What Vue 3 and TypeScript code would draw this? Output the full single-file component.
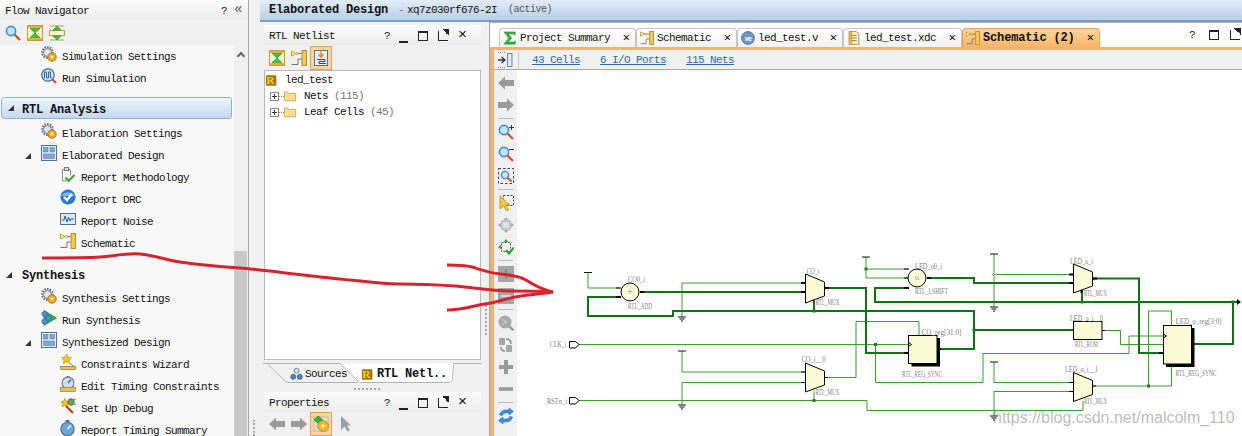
<template>
  <div class="screen">
    <svg class="sprite" aria-hidden="true">
      <symbol id="search" viewBox="0 0 16 16"><circle cx="6" cy="6" r="4.6" fill="#bfe3fa" stroke="#3f8fd0" stroke-width="1.6" /><path d="M9.6 9.6 15 15" stroke="#d0502c" stroke-width="2.2" /></symbol>
      <symbol id="collapse" viewBox="0 0 16 16"><rect x=".5" y=".5" width="15" height="15" fill="#fdf3cf" stroke="#c99a3a" /><path d="M1 2h14M1 14h14" stroke="#dcae4c" stroke-width="2" /><path d="M3 3.500h10L8 8zM3 12.500h10L8 8z" fill="#3fc23a" stroke="#2a8a28" stroke-width=".6" /></symbol>
      <symbol id="expand" viewBox="0 0 16 16"><rect x=".5" y="5.500" width="15" height="5" fill="#fdf3cf" stroke="#c99a3a" /><path d="M1 1h14M1 15h14" stroke="#c99a3a" /><path d="M8 1 12 5H4zM8 15l4-4H4z" fill="#3fc23a" stroke="#2a8a28" stroke-width=".6" /></symbol>
      <symbol id="gear" viewBox="0 0 16 16"><circle cx="6.5" cy="6.5" r="5.4" fill="none" stroke="#66788a" stroke-width="2" stroke-dasharray="1.7 1" /><circle cx="6.5" cy="6.5" r="4" fill="#dfe6ec" stroke="#6c7d8e" /><circle cx="11" cy="11" r="4.2" fill="#f3a62c" stroke="#b9780f" /><circle cx="11" cy="11" r="1.4" fill="#fff2c0" /></symbol>
      <symbol id="sim" viewBox="0 0 16 16"><circle cx="7" cy="7" r="6.2" fill="#cfe3f5" stroke="#4d7fae" stroke-width="1.4" /><path d="M3.5 10V4h2v6h2V4h2v6h1" fill="none" stroke="#35678f" /><path d="M11.5 11.5 15 15" stroke="#cf4a2a" stroke-width="2" /></symbol>
      <symbol id="layout" viewBox="0 0 16 16"><rect x=".5" y=".5" width="15" height="15" fill="#e5eef7" stroke="#566f8b" /><rect x="2.5" y="2.5" width="4.5" height="4.5" fill="#7ea7d6" stroke="#50779f" stroke-width=".5" /><rect x="9" y="2.5" width="4.5" height="4.5" fill="#7ea7d6" stroke="#50779f" stroke-width=".5" /><rect x="2.5" y="9" width="11" height="4.5" fill="#7ea7d6" stroke="#50779f" stroke-width=".5" /></symbol>
      <symbol id="method" viewBox="0 0 16 16"><path d="M2.5 2.5h8v6M2.5 2.5v11.5h4" fill="none" stroke="#8a8a8a" /><rect x="4.5" y=".5" width="4" height="3" fill="#ddd" stroke="#777" /><path d="m5.5 10.5 3 3.5 6-6" fill="none" stroke="#3ea52e" stroke-width="2.2" /></symbol>
      <symbol id="drc" viewBox="0 0 16 16"><circle cx="8" cy="8" r="7.6" fill="#2c78d4" /><path d="M1.5 7a7 6 0 0 1 13 0z" fill="#7fb4ec" /><path d="m4 8 3 3 5-6" fill="none" stroke="#fff" stroke-width="2.4" /></symbol>
      <symbol id="noise" viewBox="0 0 16 16"><rect x=".5" y="2.5" width="15" height="11" fill="#dce8f4" stroke="#4e6f93" /><path d="M2 9h2l1-4 2 6 1.5-5L10 10l1-2h3" fill="none" stroke="#2b5f92" /></symbol>
      <symbol id="schematic" viewBox="0 0 16 16"><path d="M.5 1 5 3.5.5 6z" fill="#fff6c8" stroke="#c4a030" /><circle cx="6.3" cy="3.5" r="1.1" fill="none" stroke="#c4a030" /><path d="M7.5 3.5H11M.5 14.5h6.5V9H11" fill="none" stroke="#777" /><rect x="11" y=".5" width="4.5" height="15" fill="#f4c95c" stroke="#b78f24" /></symbol>
      <symbol id="run" viewBox="0 0 16 16"><path d="M3 .5 15.5 8 3 15.5z" fill="#2fae35" stroke="#1f7f28" stroke-width=".7" /><circle cx="3.5" cy="4" r="2.7" fill="#4f8ed8" stroke="#2b5f9a" stroke-width=".5" /><circle cx="7.5" cy="8" r="2.7" fill="#4f8ed8" stroke="#2b5f9a" stroke-width=".5" /><circle cx="3.5" cy="11.5" r="2.7" fill="#4f8ed8" stroke="#2b5f9a" stroke-width=".5" /></symbol>
      <symbol id="wizard" viewBox="0 0 16 16"><path d="m6.5 0 1.7 3.2 3.4.5-2.5 2.4.6 3.4-3.2-1.6-3.1 1.6.6-3.4L1.500 3.700l3.400-.5z" fill="#f6c625" stroke="#b48a10" stroke-width=".6" /><path d="M10 9.500 15 13M0 13h16" stroke="#8d7a45" /><rect x=".5" y="12.500" width="15" height="3" fill="#e8bd58" stroke="#a27e24" stroke-width=".7" /></symbol>
      <symbol id="timing" viewBox="0 0 16 16"><circle cx="8" cy="7" r="6" fill="#cfdcea" stroke="#66809b" stroke-width="1.2" /><path d="M8 7 11 3.500" stroke="#3b5f85" stroke-width="1.2" /><rect x="6.500" y="0" width="3" height="1.500" fill="#777" /><rect x=".5" y="11.500" width="15" height="4" fill="#e8bd58" stroke="#a27e24" stroke-width=".7" /></symbol>
      <symbol id="debug" viewBox="0 0 16 16"><path d="m5 .5 1.400 2.800 3 .4-2.200 2.100.5 3L5 7.400 2.300 8.800l.5-3L.6 3.700l3-.4z" fill="#f6c625" stroke="#a9820f" stroke-width=".6" /><circle cx="11" cy="4" r="3.200" fill="#7aa04e" stroke="#48702a" /><path d="m14 2 2-1M14 6l2 1" stroke="#3ea52e" /><path d="m6 8 7 7" stroke="#b8451f" stroke-width="2.200" /></symbol>
      <symbol id="watch" viewBox="0 0 16 16"><rect x="5.500" y="0" width="4" height="2" fill="#668" /><circle cx="7.500" cy="9" r="6.600" fill="#6ca6de" stroke="#5b748f" stroke-width="1.300" /><path d="M7.500 9 11 5.500" stroke="#fff" stroke-width="1.600" /></symbol>
      <symbol id="rtl" viewBox="0 0 16 16"><rect x="1" y="2" width="13" height="13" rx="1" fill="#9a7a16" /><text x="1.500" y="13" font-family="Liberation Serif, serif" font-size="14" font-weight="700" fill="#f7c93b">R</text></symbol>
      <symbol id="folder" viewBox="0 0 16 16"><path d="M1.500 3.500h4l1 1.500h8v8.500h-13z" fill="#f8de8f" stroke="#c5a65a" /></symbol>
      <symbol id="tree-view" viewBox="0 0 16 16"><rect x="1.500" y=".5" width="13" height="15" fill="#e4edf6" stroke="#5e7389" /><path d="M8 1.500v5M5.500 4.500 8 7l2.500-2.500" fill="none" stroke="#e08a1c" stroke-width="1.600" /><path d="M4 9.500h8v2H6v2h7" fill="none" stroke="#444" /></symbol>
      <symbol id="sources" viewBox="0 0 16 16"><circle cx="8" cy="4" r="3" fill="#dfe8f2" stroke="#5a7fa7" stroke-width="1.200" /><circle cx="4" cy="11.500" r="3" fill="#4f86bf" stroke="#355e8d" stroke-width="1.200" /><circle cx="12" cy="11.500" r="3" fill="#4f86bf" stroke="#355e8d" stroke-width="1.200" /></symbol>
      <symbol id="arrow-left" viewBox="0 0 16 16"><path d="M0 8 7 1.500V5h9v6H7v3.500z" fill="#9a9a9a" /></symbol>
      <symbol id="arrow-right" viewBox="0 0 16 16"><path d="M16 8 9 1.500V5H0v6h9v3.500z" fill="#9a9a9a" /></symbol>
      <symbol id="props" viewBox="0 0 16 16"><rect x="1" y="1" width="14" height="14" fill="#e7e2cf" stroke="#a89f84" stroke-width=".6" /><path d="M1 4 5 0l5 4-4 4z" fill="#33b53a" stroke="#1f7f28" stroke-width=".6" /><circle cx="10" cy="10" r="5.400" fill="#f1b72b" stroke="#a97d14" stroke-dasharray="2 .7" /><circle cx="10" cy="10" r="1.800" fill="#fff1b5" /></symbol>
      <symbol id="cursor" viewBox="0 0 16 16"><path d="M3 0v14l3.500-3.500 3 5 2.500-1.500-3-4.500H13z" fill="#9aa0a6" /></symbol>
      <symbol id="step" viewBox="0 0 16 16"><path d="M0 8h6M3.500 5 7 8l-3.500 3" fill="none" stroke="#333" stroke-width="1.300" /><rect x="9.500" y="1.500" width="4.500" height="13" fill="#dfeaf5" stroke="#6487aa" /><path d="M0 .5h8M0 15.500h8" stroke="#888" stroke-dasharray="1 1" /></symbol>
      <symbol id="zoom-in" viewBox="0 0 16 16"><circle cx="6" cy="6" r="4.600" fill="#c5e5fb" stroke="#3f8fd0" stroke-width="1.600" /><path d="m9.600 9.600 5.400 5.400" stroke="#d0502c" stroke-width="2.200" /><path d="M11 3.500h5M13.500 1v5" stroke="#333" /></symbol>
      <symbol id="zoom-out" viewBox="0 0 16 16"><circle cx="6" cy="6" r="4.600" fill="#c5e5fb" stroke="#3f8fd0" stroke-width="1.600" /><path d="m9.600 9.600 5.400 5.400" stroke="#d0502c" stroke-width="2.200" /><path d="M11 3.500h5" stroke="#333" /></symbol>
      <symbol id="zoom-fit" viewBox="0 0 16 16"><rect x=".5" y=".5" width="15" height="15" fill="none" stroke="#444" stroke-dasharray="2.500 2" /><circle cx="7" cy="7" r="3.600" fill="#c5e5fb" stroke="#3f8fd0" stroke-width="1.400" /><path d="m9.500 9.500 4 4" stroke="#d0502c" stroke-width="2" /></symbol>
      <symbol id="select" viewBox="0 0 16 16"><rect x="5.500" y=".5" width="10" height="10" fill="none" stroke="#444" stroke-dasharray="2 1.500" /><path d="M2 1v13l3.500-3 3 5 2-1-3-4.800H12z" fill="#f3c740" stroke="#b58a16" stroke-width=".8" /></symbol>
      <symbol id="fit-gray" viewBox="0 0 16 16"><rect x="4" y="4" width="8" height="8" fill="#dfe4e8" stroke="#9aa2aa" /><path d="M8 0 5.500 3h5zM8 16l-2.500-3h5zM0 8l3-2.500v5zM16 8l-3-2.500v5z" fill="#a7adb3" /></symbol>
      <symbol id="fit-green" viewBox="0 0 16 16"><rect x="3.500" y="3.500" width="9" height="9" fill="none" stroke="#555" stroke-dasharray="2 1.300" /><path d="M8 0 5.500 3h5zM0 8l3-2.500v5z" fill="#2fa836" /><path d="m8 11 3 3.500 5-6" fill="none" stroke="#2c9a2c" stroke-width="2" /></symbol>
      <symbol id="box-plus" viewBox="0 0 16 16"><rect width="16" height="16" fill="#a6a6a6" /><path d="M3 8h10M8 3v10" stroke="#8a8a8a" stroke-width="2" /></symbol>
      <symbol id="box-minus" viewBox="0 0 16 16"><rect width="16" height="16" fill="#a6a6a6" /><path d="M3 8h10" stroke="#dadada" stroke-width="2" /></symbol>
      <symbol id="scope" viewBox="0 0 16 16"><circle cx="7" cy="7" r="6.500" fill="#a9a9a9" /><path d="m11 11 4.500 4.500" stroke="#999" stroke-width="2.400" /><path d="M4 4.500 9 7l-5 2.500" fill="none" stroke="#cfcfcf" /></symbol>
      <symbol id="plug" viewBox="0 0 16 16"><rect x="1" y="1" width="6" height="7" rx="1" fill="#a6a6a6" /><rect x="8" y="8" width="6" height="7" rx="1" fill="#a6a6a6" /><path d="M8 2c4 0 5 2 5 5M7 14c-3 0-4-1-4-4" fill="none" stroke="#8b8b8b" stroke-width="1.400" /></symbol>
      <symbol id="plus" viewBox="0 0 16 16"><path d="M1 8h14M8 1v14" stroke="#9a9a9a" stroke-width="4" /></symbol>
      <symbol id="minus" viewBox="0 0 16 16"><path d="M1 8h14" stroke="#9a9a9a" stroke-width="3.600" /></symbol>
      <symbol id="refresh" viewBox="0 0 16 16"><path d="M1.500 7C2 3.500 5 2 8 2h3V0l4.500 3.500L11 7V5H8C6 5 5 6 4.500 7.500z" fill="#3b8fdc" stroke="#2566a8" stroke-width=".5" /><path d="M14.500 9C14 12.500 11 14 8 14H5v2L.5 12.500 5 9v2h3c2 0 3-1 3.500-2.500z" fill="#3b8fdc" stroke="#2566a8" stroke-width=".5" /></symbol>
      <symbol id="sigma" viewBox="0 0 16 16"><path d="M1 1h13v4l-1.500-1.500H6L10 8l-4 4.500h6.500L14 11v4H1l5.500-7z" fill="#35b13c" stroke="#1f7f28" stroke-width=".5" /></symbol>
      <symbol id="verilog" viewBox="0 0 16 16"><circle cx="8" cy="8" r="7.300" fill="#6f98c6" stroke="#40668f" /><text x="8" y="11" text-anchor="middle" font-family="Liberation Sans, sans-serif" font-size="8" font-weight="700" fill="#fff">ve</text></symbol>
      <symbol id="xdc" viewBox="0 0 16 16"><path d="M2.500 .5h8l3 3v12h-11z" fill="#fdf0c2" stroke="#a98c3a" /><path d="M5 5h6M5 8h6M5 11h6" stroke="#8b7430" /><rect x="2.500" y=".5" width="3" height="15" fill="#f0bd45" stroke="#a98c3a" stroke-width=".6" /></symbol>
    </svg>

    <aside class="flow">
      <div class="title-bar">
        <span>Flow Navigator</span>
        <span class="title-help">?</span>
        <span class="title-hide">«</span>
      </div>
      <div class="flow-tools">
        <svg v-for="icon in ['search', 'collapse', 'expand']" :key="icon" class="icon"><use :href="`#${icon}`" /></svg>
      </div>
      <div class="flow-body">
        <div class="flow-list">
          <template v-for="row in flowRows" :key="row.label">
            <div v-if="row.level === 0" class="group" :class="{ active: row.active }">
              <i class="tri"></i>{{ row.label }}
            </div>
            <div v-else class="row" :class="`level-${row.level}`">
              <i v-if="row.open" class="tri small"></i>
              <svg class="icon"><use :href="`#${row.icon}`" /></svg>
              <span>{{ row.label }}</span>
            </div>
          </template>
        </div>
        <div class="flow-scroll">
          <span class="scroll-up"></span>
          <span class="scroll-thumb"></span>
        </div>
      </div>
    </aside>

    <div class="work">
      <header class="head">
        <b>Elaborated Design</b>
        <span class="head-dash">-</span>
        <span>xq7z030rf676-2I</span>
        <span class="head-state">(active)</span>
      </header>
      <div class="panes">
        <section class="side">
          <div class="title-bar">
            <span>RTL Netlist</span>
            <span class="win-btns"><i class="b-help">?</i><i class="b-min"></i><i class="b-max"></i><i class="b-pop"></i><i class="b-close">×</i></span>
          </div>
          <div class="side-tools">
            <svg class="icon"><use href="#collapse" /></svg>
            <svg class="icon"><use href="#schematic" /></svg>
            <span class="pressed"><svg class="icon"><use href="#tree-view" /></svg></span>
          </div>
          <div class="net-tree">
            <div class="net-root"><svg class="icon"><use href="#rtl" /></svg><span>led_test</span></div>
            <div v-for="node in netNodes" :key="node.label" class="net-node">
              <i class="plus-box"></i>
              <svg class="icon folder"><use href="#folder" /></svg>
              <span>{{ node.label }} <em>({{ node.count }})</em></span>
            </div>
          </div>
          <div class="side-tabs">
            <svg class="tab-shape" viewBox="0 0 224 22">
              <path d="M0 .5h77M4 .5 22 18c2 1.500 3 1.500 5 1.500H95" fill="none" stroke="#b4b4b4" />
              <path d="M77 .5 94 17c2 2 3 2.500 5 2.500h86c3 0 4-1 4.500-4l1-15h28" fill="#fff" stroke="#b4b4b4" />
            </svg>
            <span class="tab-sources"><svg class="icon"><use href="#sources" /></svg>Sources</span>
            <b class="tab-netlist"><svg class="icon"><use href="#rtl" /></svg>RTL Netl..</b>
          </div>
          <div class="sash-h"></div>
          <div class="title-bar props">
            <span>Properties</span>
            <span class="win-btns"><i class="b-help">?</i><i class="b-min"></i><i class="b-max"></i><i class="b-pop"></i><i class="b-close">×</i></span>
          </div>
          <div class="side-tools tools-props">
            <svg class="icon"><use href="#arrow-left" /></svg>
            <svg class="icon"><use href="#arrow-right" /></svg>
            <span class="pressed"><svg class="icon"><use href="#props" /></svg></span>
            <svg class="icon"><use href="#cursor" /></svg>
          </div>
        </section>

        <main class="main">
          <div class="tab-strip">
            <div
              v-for="tab in tabs"
              :key="tab.label"
              class="doc-tab"
              :class="{ current: tab.current }"
              :style="{ width: tab.width + 'px' }"
            >
              <svg class="icon"><use :href="`#${tab.icon}`" /></svg>
              <span class="doc-label">{{ tab.label }}</span>
              <span class="doc-close">✕</span>
            </div>
            <span class="win-btns strip-btns"><i>?</i><i class="b-max"></i><i class="b-pop"></i></span>
          </div>
          <div class="doc">
            <div class="stats">
              <span class="stats-step"><svg class="icon"><use href="#step" /></svg></span>
              <a v-for="stat in stats" :key="stat">{{ stat }}</a>
            </div>
            <div class="doc-body">
              <div class="sch-tools">
                <template v-for="(tool, i) in schTools" :key="i">
                  <hr v-if="tool === '-'" />
                  <svg v-else class="icon"><use :href="`#${tool}`" /></svg>
                </template>
              </div>
              <svg class="canvas" viewBox="517 70 725 366">
                <g fill="none" stroke="#37a02a">
                  <polyline v-for="(w, i) in thinWires" :key="i" :points="w" />
                </g>
                <g fill="none" stroke="#0d7314" stroke-width="2">
                  <polyline v-for="(w, i) in thickWires" :key="i" :points="w" />
                </g>
                <g fill="#16801c">
                  <rect v-for="(n, i) in nodes" :key="i" :x="n[0] - 1.500" :y="n[1] - 1.500" width="3" height="3" />
                </g>
                <g stroke="#000">
                  <path v-for="(p, i) in stubs" :key="i" :d="p" :stroke-width="i < 15 ? 2 : 1" />
                </g>
                <g fill="none" stroke="#111">
                  <path v-for="(x, i) in vcc" :key="i" :d="`M${x[0] - 4} ${x[1]}h8`" />
                  <path v-for="(x, i) in gnd" :key="i" :d="`M${x[0] - 4} ${x[1]}h8M${x[0] - 2.500} ${x[1] + 2}h5M${x[0] - 1} ${x[1] + 4}h2`" />
                </g>
                <g fill="#fdfbd6" stroke="#000">
                  <circle cx="630" cy="292" r="9" />
                  <circle cx="917" cy="278" r="9" />
                  <polygon v-for="(m, i) in muxes" :key="i" :points="mux(m[0], m[1])" />
                  <rect x="1073.500" y="321.500" width="28.500" height="18" />
                </g>
                <text class="op" x="630" y="294.500" text-anchor="middle">+</text>
                <text class="op" x="917" y="281" text-anchor="middle">«</text>
                <g>
                  <rect x="911.500" y="338" width="28.500" height="28.500" fill="#000" />
                  <rect x="908.500" y="335.500" width="28.500" height="28" fill="#fdfbd6" stroke="#000" />
                  <rect x="1166" y="328" width="28.500" height="39" fill="#000" />
                  <rect x="1163.500" y="325.500" width="28" height="38.500" fill="#fdfbd6" stroke="#000" />
                </g>
                <path d="M569.500 341.500h6l3.500 3-3.500 3.500h-6zM569.500 397.500h6l3.500 3-3.500 3.500h-6z" fill="#fff" stroke="#000" />
                <path d="M908.500 342.500l3 2-3 2M1163.500 334l3 2-3 2" fill="none" stroke="#000" />
                <path d="M1237 299l4 3-4 3z" fill="#000" />
                <text
                  v-for="(l, i) in labels"
                  :key="i"
                  class="sch-label"
                  :x="l.x"
                  :y="l.y"
                  :textLength="l.w"
                  lengthAdjust="spacingAndGlyphs"
                >{{ l.t }}</text>
              </svg>
            </div>
          </div>
        </main>
      </div>
    </div>

    <span class="sash-v sash-flow"></span>
    <span class="sash-v sash-main"></span>
    <svg class="scribble" viewBox="0 0 1242 436">
      <path
        d="M42 258C60 258 85 258 100 257S125 253 140 254 160 259 180 262 225 267 240 268 300 275 330 278 380 284 400 284 440 285 455 286 490 291 510 291 535 291 553 292"
        fill="none"
        stroke="#d8232c"
        stroke-width="3"
      />
      <path
        d="M447 265C458 265 465 265 472 267S490 273 500 274 520 276 526 280 540 289 553 292C540 294 525 295 515 297S495 303 485 304 465 310 447 310"
        fill="none"
        stroke="#d8232c"
        stroke-width="3"
      />
    </svg>
    <div class="watermark">https://blog.csdn.net/malcolm_110</div>
  </div>
</template>

<script setup lang="ts">
interface FlowRow {
  label: string
  level: number
  icon?: string
  open?: boolean
  active?: boolean
}

const flowRows: FlowRow[] = [
  { label: 'Simulation Settings', level: 1, icon: 'gear' },
  { label: 'Run Simulation', level: 1, icon: 'sim' },
  { label: 'RTL Analysis', level: 0, active: true },
  { label: 'Elaboration Settings', level: 1, icon: 'gear' },
  { label: 'Elaborated Design', level: 1, icon: 'layout', open: true },
  { label: 'Report Methodology', level: 2, icon: 'method' },
  { label: 'Report DRC', level: 2, icon: 'drc' },
  { label: 'Report Noise', level: 2, icon: 'noise' },
  { label: 'Schematic', level: 2, icon: 'schematic' },
  { label: 'Synthesis', level: 0 },
  { label: 'Synthesis Settings', level: 1, icon: 'gear' },
  { label: 'Run Synthesis', level: 1, icon: 'run' },
  { label: 'Synthesized Design', level: 1, icon: 'layout', open: true },
  { label: 'Constraints Wizard', level: 2, icon: 'wizard' },
  { label: 'Edit Timing Constraints', level: 2, icon: 'timing' },
  { label: 'Set Up Debug', level: 2, icon: 'debug' },
  { label: 'Report Timing Summary', level: 2, icon: 'watch' }
]

const netNodes = [
  { label: 'Nets', count: 115 },
  { label: 'Leaf Cells', count: 45 }
]

const tabs = [
  { label: 'Project Summary', icon: 'sigma', width: 137 },
  { label: 'Schematic', icon: 'schematic', width: 101 },
  { label: 'led_test.v', icon: 'verilog', width: 106 },
  { label: 'led_test.xdc', icon: 'xdc', width: 119 },
  { label: 'Schematic (2)', icon: 'schematic', width: 138, current: true }
]

const stats = ['43 Cells', '6 I/O Ports', '115 Nets']

const schTools = [
  'arrow-left', 'arrow-right', '-',
  'zoom-in', 'zoom-out', 'zoom-fit', '-',
  'select', 'fit-gray', 'fit-green', '-',
  'box-plus', 'box-minus', '-',
  'scope', 'plug', 'plus', 'minus', '-',
  'refresh'
]

const thinWires = [
  '588,273 588,288 620,288',
  '805,283 682,283 682,317',
  '579,344.5 908,344.5',
  '875.5,344.5 875.5,382.5 983,382.5 983,353.500 1129,353.500 1129,336 1164,336',
  '579,400.5 867,400.5 867,410.500 1083,410.500 1083,401',
  '814,400.5 814,391',
  '825,377.500 856,377.500 856,321.500 919,321.500 919,335',
  '682,351 682,372 805,372',
  '805,382.500 682,382.500 682,405',
  '866,257 866,278 908,278',
  '866,269 908,269',
  '994,254 994,273 992.500,274.500 994,276 994,307',
  '994,274.500 1073,274.500',
  '1102,330.500 1120.500,330.500 1120.500,344.500 1163,344.500',
  '1171.500,325 1171.500,311 1148.500,311 1148.500,386',
  '1093,386 1171.500,386 1171.500,364',
  '994,362 994,382.500 1073,382.500',
  '1073,391.500 994,391.500 994,416'
]

const thickWires = [
  '620,297 588,297 588,316 673,316 673,311 974,311 974,349 940,349',
  '640,292 805,292',
  '825,288 866,288 866,353 908,353',
  '908,288 875,288 875,302 1238,302',
  '927,278 974,278 974,283 1073,283',
  '974,330 1073,330',
  '1093,278.500 1139,278.500 1139,353 1163,353',
  '1194,344 1233,344 1233,302',
  '814,300 814,311',
  '1082,289 1082,302'
]

const nodes = [
  [814, 311], [814, 400.5], [875.5, 344.5], [866, 269], [974, 330],
  [1082, 302], [1233, 302], [1148.500, 386]
]

const stubs = [
  'M801 283h5', 'M801 292h5', 'M825 288h4', 'M616 297h5', 'M640 292h4',
  'M904 288h5', 'M927 278h4', 'M1069 274.500h5', 'M1069 283h5', 'M1093 278.500h4',
  'M904 353h5', 'M937 349h4', 'M1159 353h5', 'M1191 344h4', 'M1081.500 289v4',
  'M616 288h5', 'M904 269h5', 'M904 278h5', 'M801 372h5', 'M801 382.500h5',
  'M825 377.500h3', 'M1069 382.500h5', 'M1069 391.500h5', 'M1093 386h3', 'M1102 330.500h3'
]

const vcc = [[588, 272.5], [682, 351], [866, 257], [994, 254], [994, 362]]
const gnd = [[682, 317], [682, 405], [994, 307], [994, 416]]
const muxes = [[805.5, 274], [805.5, 363], [1073.5, 264], [1073.5, 372.5]]

// mux body: wide on the left, narrow on the right
const mux = (x: number, y: number) =>
  `${x},${y} ${x + 19},${y + 8} ${x + 19},${y + 22} ${x},${y + 29}`

const labels = [
  { t: 'CO0_i', x: 628, y: 282, w: 17 },
  { t: 'RTL_ADD', x: 628, y: 308.5, w: 24 },
  { t: 'CO_i', x: 806.5, y: 273.5, w: 13 },
  { t: 'RTL_MUX', x: 815.5, y: 305, w: 24 },
  { t: 'CLK_i', x: 550, y: 347, w: 16.5 },
  { t: 'RSTn_i', x: 547, y: 403.5, w: 20 },
  { t: 'CO_i__0', x: 801.5, y: 362, w: 24 },
  { t: 'RTL_MUX', x: 815.5, y: 394.5, w: 24 },
  { t: 'LED_o0_i', x: 915, y: 268.5, w: 27 },
  { t: 'RTL_LSHIFT', x: 915, y: 294, w: 33 },
  { t: 'LED_o_i', x: 1070, y: 263.5, w: 23 },
  { t: 'RTL_MUX', x: 1084, y: 295.5, w: 23 },
  { t: 'LED_o_i__0', x: 1070, y: 320.5, w: 33 },
  { t: 'RTL_ROM', x: 1075, y: 347, w: 23 },
  { t: 'LED_o_i__1', x: 1065, y: 371.5, w: 33 },
  { t: 'RTL_MUX', x: 1084, y: 403.5, w: 23 },
  { t: 'CO_reg[31:0]', x: 921.5, y: 334.5, w: 40 },
  { t: 'RTL_REG_SYNC', x: 902, y: 376.5, w: 40 },
  { t: 'LED_o_reg[3:0]', x: 1175.5, y: 324, w: 46 },
  { t: 'RTL_REG_SYNC', x: 1175.5, y: 375.5, w: 41 }
]
</script>

<style scoped>
.screen {
  position: relative;
  display: flex;
  width: 1242px;
  height: 436px;
  overflow: hidden;
  background: #f1f1f1;
  color: #111;
  font: 11px/1 "Liberation Mono", "DejaVu Sans Mono", monospace;
  letter-spacing: -0.6px;
}

.screen * {
  box-sizing: border-box;
}

.sprite {
  display: none;
}

.icon {
  display: block;
  flex: none;
  width: 16px;
  height: 16px;
}

.flow {
  display: flex;
  flex-direction: column;
  flex: none;
  width: 249px;
  border-right: 1px solid #a8a8a8;
}

.title-bar {
  position: relative;
  flex: none;
  height: 20px;
  padding-left: 5px;
  line-height: 22px;
  background: linear-gradient(#fcfcfc, #ececec);
}

.title-help {
  position: absolute;
  left: 221px;
}

.title-hide {
  position: absolute;
  left: 234px;
  top: -2px;
  font-size: 14px;
  color: #555;
}

.flow-tools {
  display: flex;
  flex: none;
  gap: 6px;
  align-items: center;
  height: 25px;
  padding-left: 5px;
  background: #f0f0f0;
}

.flow-body {
  display: flex;
  flex: 1;
  background: #f8f8f8;
}

.flow-list {
  flex: none;
  width: 234px;
}

.row {
  position: relative;
  display: flex;
  align-items: center;
  height: 22px;
}

.row .icon {
  margin-top: -5px;
  margin-right: 5px;
}

.row span {
  padding-top: 2px;
}

.level-1 {
  padding-left: 41px;
}

.level-2 {
  padding-left: 60px;
}

.group {
  position: relative;
  height: 22px;
  margin-top: 11px;
  padding-left: 22px;
  font-size: 12px;
  font-weight: 700;
  letter-spacing: -0.2px;
  line-height: 23px;
}

.group.active {
  width: 231px;
  margin-top: 8px;
  margin-bottom: 3px;
  margin-left: 1px;
  padding-left: 20px;
  border: 1px solid #8fb2d8;
  border-radius: 3px;
  line-height: 25px;
  background: linear-gradient(#f0f5fb, #c4d9f0);
}

.tri {
  position: absolute;
  left: 6px;
  top: 7px;
  width: 0;
  height: 0;
  border-style: solid;
  border-width: 0 0 6px 6px;
  border-color: transparent transparent #333;
}

.tri.small {
  left: 25px;
  top: 9px;
}

.flow-scroll {
  position: relative;
  flex: none;
  width: 14px;
  background: #f0f0f0;
}

.scroll-up {
  position: absolute;
  left: 4px;
  top: 8px;
  width: 6px;
  height: 6px;
  border-top: 2px solid #667;
  border-left: 2px solid #667;
  transform: rotate(45deg);
}

.scroll-thumb {
  position: absolute;
  left: 0;
  top: 206px;
  bottom: 0;
  width: 13px;
  background: #c8c8c8;
}

.work {
  display: flex;
  flex: 1;
  flex-direction: column;
  min-width: 0;
  margin-left: 11px;
}

.head {
  display: flex;
  flex: none;
  align-items: center;
  height: 22px;
  padding-left: 9px;
  border-bottom: 2px solid #7f9ab8;
  border-top-left-radius: 3px;
  background: linear-gradient(#e2ecf7, #b7cfe8);
}

.head b {
  margin-right: 10px;
  font-size: 12px;
  letter-spacing: -0.2px;
}

.head-dash {
  margin-right: 3px;
  color: #777;
}

.head-state {
  margin-left: 11px;
  color: #555;
  font-size: 10px;
  letter-spacing: -0.5px;
}

.panes {
  display: flex;
  flex: 1;
  min-height: 0;
}

.side {
  display: flex;
  flex: none;
  flex-direction: column;
  width: 217px;
  margin: 3px 8px 0 4px;
}

.win-btns {
  position: absolute;
  left: 117px;
  top: 1px;
  display: flex;
  align-items: center;
  gap: 10px;
  height: 20px;
}

.win-btns i {
  position: relative;
  display: block;
  width: 12px;
  font-style: normal;
  line-height: 20px;
  text-align: center;
}

.win-btns .b-help {
  margin-right: -4px;
}

.win-btns .b-min {
  width: 9px;
  height: 1px;
}

.b-min::after {
  content: "";
  position: absolute;
  left: 0;
  right: 0;
  top: 5px;
  border-bottom: 2px solid #222;
}

.win-btns .b-max {
  width: 10px;
  height: 10px;
  border: 1px solid #222;
  border-top-width: 2px;
}

.win-btns .b-pop {
  width: 10px;
  height: 10px;
  border-left: 1px solid #222;
  border-bottom: 1px solid #222;
}

.b-pop::after {
  content: "";
  position: absolute;
  left: 3px;
  top: -2px;
  width: 7px;
  height: 7px;
  background: linear-gradient(225deg, #222 50%, transparent 50%);
}

.win-btns .b-close {
  width: 9px;
  font-size: 15px;
  letter-spacing: 0;
}

.side-tools {
  display: flex;
  flex: none;
  align-items: center;
  gap: 6px;
  height: 25px;
  padding-left: 5px;
  background: #f0f0f0;
}

.pressed {
  display: block;
  margin-left: -3px;
  padding: 3px 2px;
  border: 1px solid #e0a060;
  background: #f9d5a5;
}

.net-tree {
  flex: 1;
  min-height: 0;
  border: 1px solid #b9b9b9;
  background: #fff;
}

.net-root {
  display: flex;
  align-items: center;
  gap: 7px;
  height: 16px;
  margin-top: 1px;
}

.net-root .icon {
  width: 13px;
  height: 14px;
}

.net-node {
  position: relative;
  display: flex;
  align-items: center;
  height: 16px;
  padding-left: 18px;
}

.net-node em {
  color: #777;
  font-style: normal;
}

.plus-box {
  position: absolute;
  left: 5px;
  top: 4px;
  width: 9px;
  height: 9px;
  border: 1px solid #888;
  background:
    linear-gradient(#333, #333) center / 5px 1px no-repeat,
    linear-gradient(#333, #333) center / 1px 5px no-repeat,
    #fff;
}

.plus-box::after {
  content: "";
  position: absolute;
  left: 8px;
  top: 3px;
  width: 5px;
  border-top: 1px dotted #888;
}

.folder {
  width: 14px;
  height: 14px;
  margin-right: 7px;
}

.side-tabs {
  position: relative;
  display: flex;
  flex: none;
  align-items: center;
  height: 22px;
  margin: 3px 0 0 -1px;
}

.tab-shape {
  position: absolute;
  left: 0;
  top: 0;
  width: 224px;
  height: 22px;
}

.tab-sources,
.tab-netlist {
  position: relative;
  display: flex;
  align-items: center;
}

.tab-sources {
  gap: 2px;
  margin-left: 27px;
}

.tab-sources .icon,
.tab-netlist .icon {
  width: 13px;
  height: 14px;
}

.tab-netlist {
  gap: 3px;
  margin-left: 14px;
  font-size: 12px;
  letter-spacing: -0.2px;
}

.sash-h {
  flex: none;
  width: 26px;
  height: 2px;
  margin: 3px 0 2px 90px;
  border-top: 2px dotted #a8a8a8;
}

.props {
  background: linear-gradient(#fbfbfb, #ececec);
}

.tools-props {
  height: 24px;
  padding-left: 5px;
}

.main {
  display: flex;
  flex: 1;
  flex-direction: column;
  min-width: 0;
  border-left: 1px solid #a5a5a5;
  border-top: 1px solid #b5b5b5;
}

.tab-strip {
  position: relative;
  display: flex;
  flex: none;
  align-items: flex-end;
  height: 24px;
  padding-left: 9px;
  background: #fff;
}

.doc-tab {
  display: flex;
  flex: none;
  align-items: center;
  height: 19px;
  padding: 0 5px 0 3px;
  border: 1px solid #c5c5c5;
  border-bottom: 0;
  border-radius: 4px 4px 0 0;
  background: linear-gradient(#fff, #f3f3f3);
}

.doc-tab .icon {
  width: 14px;
  height: 14px;
  margin-right: 3px;
}

.doc-label {
  flex: 1;
}

.doc-close {
  font-size: 12px;
  font-weight: 700;
  letter-spacing: 0;
}

.doc-tab.current {
  border-color: #e6a25a;
  background: linear-gradient(#fdd49c, #fbb568);
  font-size: 12px;
  font-weight: 700;
  letter-spacing: -0.15px;
}

.strip-btns {
  left: 696px;
  top: 2px;
  gap: 11px;
}

.doc {
  display: flex;
  flex: 1;
  flex-direction: column;
  min-height: 0;
  border-left: 4px solid #ecb47a;
  border-top: 3px solid #f5b26c;
}

.stats {
  display: flex;
  flex: none;
  align-items: center;
  height: 20px;
  border-bottom: 1px solid #a9a9a9;
  background: #f0f0f0;
}

.stats-step {
  display: flex;
  justify-content: center;
  width: 25px;
  margin-right: 13px;
  border-right: 1px solid #c8c8c8;
}

.stats a {
  margin-right: 20px;
  padding-top: 2px;
  color: #2b6ca8;
  text-decoration: underline;
}

.doc-body {
  display: flex;
  flex: 1;
  min-height: 0;
}

.sch-tools {
  display: flex;
  flex: none;
  flex-direction: column;
  align-items: center;
  gap: 6px;
  width: 23px;
  padding-top: 5px;
  background: #f0f0f0;
}

.sch-tools hr {
  flex: none;
  width: 15px;
  height: 0;
  margin: -1px 0;
  border: 0;
  border-top: 1px solid #bbb;
}

.canvas {
  flex: 1;
  min-width: 0;
  height: 366px;
  background: #fff;
}

.sch-label {
  fill: #808080;
  font: 8px "Liberation Serif", serif;
  letter-spacing: 0;
}

.op {
  fill: #aaa;
  font: 10px "Liberation Sans", sans-serif;
  letter-spacing: 0;
}

.sash-v {
  position: absolute;
  width: 0;
  border-left: 2px dotted #a8a8a8;
}

.sash-flow {
  left: 253px;
  top: 420px;
  height: 16px;
}

.sash-main {
  left: 485px;
  top: 305px;
  height: 30px;
}

.scribble {
  position: absolute;
  inset: 0;
  width: 1242px;
  height: 436px;
  pointer-events: none;
}

.watermark {
  position: absolute;
  left: 993px;
  top: 408px;
  color: rgba(120, 120, 120, 0.5);
  font: 16px/1.200 "Liberation Sans", sans-serif;
  letter-spacing: 0;
  white-space: nowrap;
}
</style>

<style>
html,
body {
  margin: 0;
  background: #f1f1f1;
}
</style>
